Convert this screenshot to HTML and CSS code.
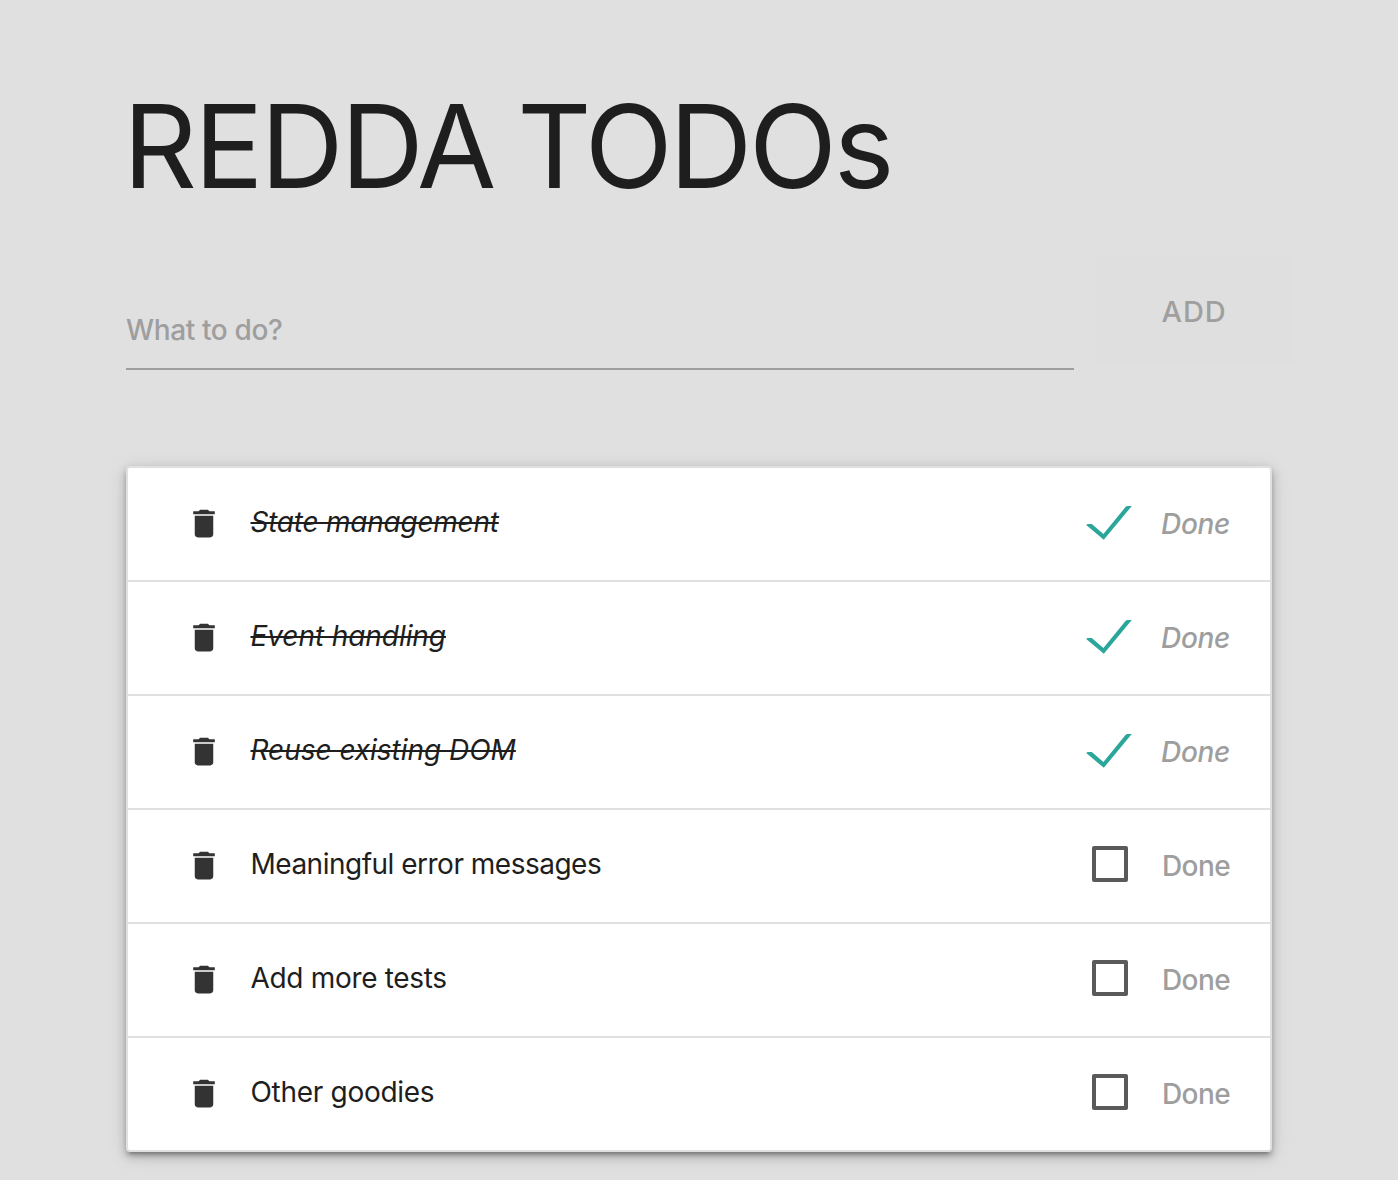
FILE: index.html
```html
<!DOCTYPE html>
<html lang="en">
<head>
<meta charset="utf-8">
<title>REDDA TODOs</title>
<link rel="stylesheet" href="styles.css">
</head>
<body>
<svg class="sprite" aria-hidden="true">
  <symbol id="trash" viewBox="0 0 24 24"><path d="M6 19c0 1.1.9 2 2 2h8c1.1 0 2-.9 2-2V7H6v12zM19 4h-3.5l-1-1h-5l-1 1H5v2h14V4z"/></symbol>
  <symbol id="check" viewBox="0 0 46 34"><path d="M.2 19.1 1.6 18.1H5.8L17.4 27.9 39.7.8 41.3 0H45.8L17.8 33.8z"/></symbol>
</svg>
<main class="page">
  <h1 class="title"><span class="brand">REDDA</span> TODOs</h1>
  <form class="entry">
    <div class="field"><span class="hint">What to do?</span></div>
    <button class="add" type="button" disabled><span class="add-text">ADD</span></button>
  </form>
  <ul class="list">
    <li class="item done"><svg class="trash"><use href="#trash"/></svg><span class="label t1">State management</span><svg class="check"><use href="#check"/></svg><span class="state">Done</span></li>
    <li class="item done"><svg class="trash"><use href="#trash"/></svg><span class="label t2">Event handling</span><svg class="check"><use href="#check"/></svg><span class="state">Done</span></li>
    <li class="item done"><svg class="trash"><use href="#trash"/></svg><span class="label t3">Reuse existing DOM</span><svg class="check"><use href="#check"/></svg><span class="state">Done</span></li>
    <li class="item"><svg class="trash"><use href="#trash"/></svg><span class="label t4">Meaningful error messages</span><span class="box"></span><span class="state">Done</span></li>
    <li class="item"><svg class="trash"><use href="#trash"/></svg><span class="label t5">Add more tests</span><span class="box"></span><span class="state">Done</span></li>
    <li class="item"><svg class="trash"><use href="#trash"/></svg><span class="label t6">Other goodies</span><span class="box"></span><span class="state">Done</span></li>
  </ul>
</main>
</body>
</html>
```

FILE: styles.css
```css
* { box-sizing: border-box; }
body {
  margin: 0;
  background: #e0e0e0;
  color: #1e1e1e;
  font-family: Inter, "Liberation Sans", sans-serif;
  font-size: 28px;
  overflow: hidden;
}
.sprite { display: none; }
.page { padding: 83px 102px 28px 126px; }
.title {
  margin: 0 0 45px -3px;
  font-size: 115px;
  font-weight: 430;
  line-height: 128px;
  letter-spacing: -3.3px;
  word-spacing: -5.4px;
  white-space: nowrap;
}
.brand { letter-spacing: -2.8px; }
.entry {
  display: flex;
  gap: 22px;
  height: 114px;
  margin: 0 0 96px;
}
.field {
  width: 948px;
  padding-top: 54px;
  border-bottom: 2px solid #9e9e9e;
  color: #9e9e9e;
  font-weight: 460;
  line-height: 40px;
  letter-spacing: -0.37px;
  white-space: nowrap;
}
.add {
  width: 198px;
  height: 108px;
  padding: 3px 2px 0 0;
  border: 0;
  border-radius: 4px;
  background: #dfdfdf;
  color: #9f9f9f;
  font: 460 29px/40px Inter, "Liberation Sans", sans-serif;
  letter-spacing: 0.8px;
}
.list {
  width: 1146px;
  margin: 0;
  padding: 0;
  list-style: none;
  border: 2px solid #e0e0e0;
  border-radius: 4px;
  background: #fff;
  box-shadow: 0 4px 4px rgba(0,0,0,.14), 0 6px 2px -4px rgba(0,0,0,.15), 0 4px 10px rgba(0,0,0,.2), 0 4px 20px rgba(0,0,0,.12);
}
.item {
  display: flex;
  align-items: center;
  height: 114px;
  padding: 0 40px 4px 57px;
  border-bottom: 2px solid #e0e0e0;
  white-space: nowrap;
}
.item:last-child { height: 112px; border-bottom: 0; }
.trash {
  width: 38px;
  height: 37px;
  margin: 3px 27.5px 0 0;
  fill: #333;
}
.label { font-weight: 420; line-height: 40px; }
.t1 { letter-spacing: -0.24px; }
.t2 { letter-spacing: -0.08px; }
.t3 { letter-spacing: -0.03px; }
.t4 { letter-spacing: -0.5px; }
.t5 { letter-spacing: -0.32px; }
.t6 { letter-spacing: -0.3px; }
.done { font-style: italic; }
.done .label { text-decoration: line-through; text-decoration-thickness: 2px; }
.box {
  width: 36px;
  height: 36px;
  margin-left: auto;
  border: 4px solid #5a5a5a;
  border-radius: 2px;
}
.check {
  width: 46px;
  height: 34px;
  margin: 2px 0 0 auto;
  fill: #2ba69a;
}
.state {
  width: 68px;
  margin: 4px 0 0 34px;
  color: #9e9e9e;
  font-weight: 460;
  line-height: 40px;
  letter-spacing: -0.6px;
}
.done .state { width: 69px; margin-left: 29px; letter-spacing: -0.3px; }
```
